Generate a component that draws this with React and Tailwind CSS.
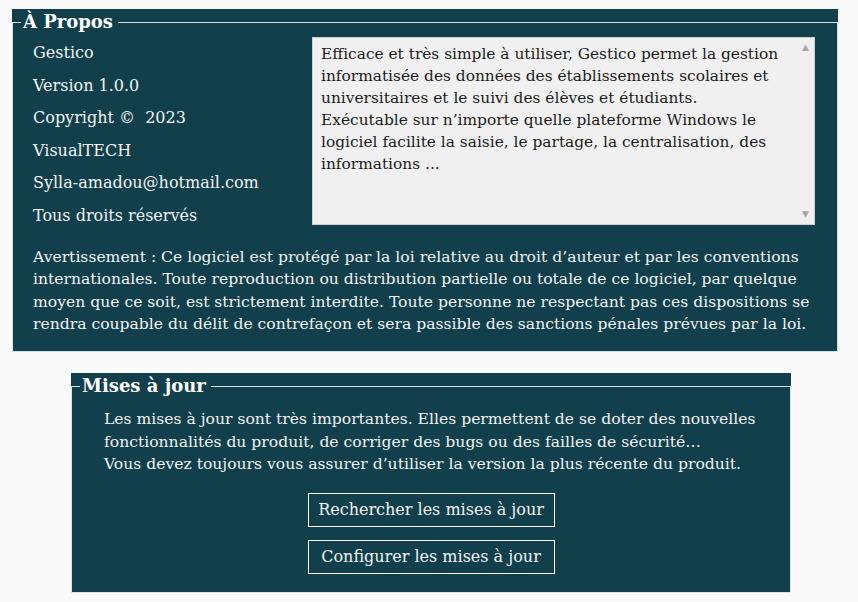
const font = { fontFamily: '"DejaVu Serif", serif' };

function Legend({ children, className = "" }) {
  return (
    <legend className={`pl-[2px] pr-[5px] text-[18px] font-bold leading-none text-white ${className}`}>{children}</legend>
  );
}

export default function App() {
  return (
    <div className="min-h-screen bg-[#f9f9f9] pt-[9px] text-[16px] text-[#f2f2f2]" style={font}>
      <div className="mx-[12px] w-[826px] bg-[#11404c] pt-[4px]">
        <fieldset className="h-[339px] border border-[#d8e1e3] px-[20px]">
          <Legend className="ml-[-12px]">À Propos</Legend>
          <div className="flex gap-[20px]">
            <ul className="flex w-[259px] flex-col gap-[10px] pt-[11px] leading-[22.5px]">
              <li>Gestico</li>
              <li>Version 1.0.0</li>
              <li>Copyright ©&nbsp; 2023</li>
              <li>VisualTECH</li>
              <li>Sylla-amadou@hotmail.com</li>
              <li>Tous droits réservés</li>
            </ul>
            <div className="mt-[6px] flex h-[188px] w-[503px] border border-[#d0d0d0] bg-[#f0f0f0] text-[#1c1c1c]">
              <p className="flex-1 whitespace-nowrap px-[8px] pt-[5px] text-[15.4px] leading-[22px]">
                Efficace et très simple à utiliser, Gestico permet la gestion<br />
                informatisée des données des établissements scolaires et<br />
                universitaires et le suivi des élèves et étudiants.<br />
                Exécutable sur n’importe quelle plateforme Windows le<br />
                logiciel facilite la saisie, le partage, la centralisation, des<br />
                informations ...
              </p>
              <div className="flex w-[17px] flex-col items-center justify-between py-[5px] text-[#a8a8a8]">
                <span className="text-[9px] leading-none">▲</span>
                <span className="text-[9px] leading-none">▼</span>
              </div>
            </div>
          </div>
          <p className="mt-[19px] whitespace-nowrap text-[15.6px] leading-[22.3px]">
            Avertissement : Ce logiciel est protégé par la loi relative au droit d’auteur et par les conventions<br />
            internationales. Toute reproduction ou distribution partielle ou totale de ce logiciel, par quelque<br />
            moyen que ce soit, est strictement interdite. Toute personne ne respectant pas ces dispositions se<br />
            rendra coupable du délit de contrefaçon et sera passible des sanctions pénales prévues par la loi.
          </p>
        </fieldset>
      </div>

      <div className="ml-[71px] mt-[21px] w-[720px] bg-[#11404c] pt-[4px]">
        <fieldset className="h-[216px] border border-[#d8e1e3] px-[32px]">
          <Legend className="ml-[-24px] text-[17.5px]">Mises à jour</Legend>
          <p className="mt-[13px] whitespace-nowrap text-[15.6px] leading-[22.5px]">
            Les mises à jour sont très importantes. Elles permettent de se doter des nouvelles<br />
            fonctionnalités du produit, de corriger des bugs ou des failles de sécurité…<br />
            Vous devez toujours vous assurer d’utiliser la version la plus récente du produit.
          </p>
          <div className="mt-[17px] flex flex-col items-center gap-[13px]">
            <button className="h-[34px] w-[247px] border border-white">Rechercher les mises à jour</button>
            <button className="h-[34px] w-[247px] border border-white">Configurer les mises à jour</button>
          </div>
        </fieldset>
      </div>
    </div>
  );
}
